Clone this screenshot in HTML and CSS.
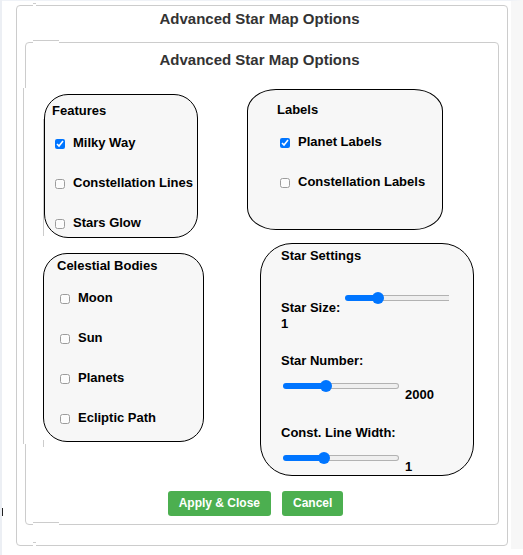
FILE: index.html
```html
<!DOCTYPE html>
<html lang="en">
<head>
<meta charset="utf-8">
<title>Advanced Star Map Options</title>
<link rel="stylesheet" href="styles.css">
</head>
<body>
<main class="page">
  <section class="panel">
    <h1 class="title">Advanced Star Map Options</h1>
    <form class="dialog">
      <h2 class="title">Advanced Star Map Options</h2>
      <div class="columns">
        <div class="column column-left">
          <section class="card features">
            <h3>Features</h3>
            <label class="option"><input type="checkbox" checked>Milky Way</label>
            <label class="option"><input type="checkbox">Constellation Lines</label>
            <label class="option"><input type="checkbox">Stars Glow</label>
          </section>
          <section class="card bodies">
            <h3>Celestial Bodies</h3>
            <label class="option"><input type="checkbox">Moon</label>
            <label class="option"><input type="checkbox">Sun</label>
            <label class="option"><input type="checkbox">Planets</label>
            <label class="option"><input type="checkbox">Ecliptic Path</label>
          </section>
        </div>
        <div class="column column-right">
          <section class="card labels">
            <h3>Labels</h3>
            <label class="option"><input type="checkbox" checked>Planet Labels</label>
            <label class="option"><input type="checkbox">Constellation Labels</label>
          </section>
          <section class="card settings">
            <h3>Star Settings</h3>
            <div class="size">
              <div class="size-row">
                <label for="size">Star Size:</label>
                <span class="clip"><input type="range" id="size" min="0" max="4" step="0.1" value="1" style="--fill: 25%"></span>
              </div>
              <output for="size">1</output>
            </div>
            <div class="setting">
              <label for="number">Star Number:</label>
              <div class="slider-row">
                <input type="range" id="number" min="100" max="5500" step="100" value="2000" style="--fill: 35%">
                <output for="number">2000</output>
              </div>
            </div>
            <div class="setting">
              <label for="width">Const. Line Width:</label>
              <div class="slider-row">
                <input type="range" id="width" min="0" max="3" step="0.1" value="1" style="--fill: 33%">
                <output for="width">1</output>
              </div>
            </div>
          </section>
        </div>
      </div>
      <div class="actions">
        <button type="submit">Apply &amp; Close</button>
        <button type="button">Cancel</button>
      </div>
      <span class="seam seam-left"></span>
      <span class="seam seam-top"></span>
      <span class="seam seam-bottom"></span>
      <span class="seam guide-upper"></span>
      <span class="seam guide-lower"></span>
    </form>
  </section>
</main>
</body>
</html>
```
FILE: styles.css
```css
* {
  box-sizing: border-box;
}

body {
  margin: 0;
  position: relative;
  min-height: 100vh;
  border-left: 2px solid #eceff4;
  background: #fff;
  color: #000;
  font: bold 13px/16px "Liberation Sans", Arial, sans-serif;
}

/* dark handle on the window's left edge */
body::before {
  content: "";
  position: absolute;
  left: -2px;
  top: 508px;
  width: 2px;
  height: 6px;
  border: solid #222;
  border-width: 1px 1px 1px 0;
}

.page {
  padding: 4px 3px 3px 14px;
  border-top: 1px solid #eff2f7;
  border-right: 12px solid #f7f7f7;
}

.panel {
  position: relative;
  padding: 4px 8px 20px;
  border: 1px solid #ccc;
  border-radius: 4px;
}

/* short raised notches in the panel outline */
.panel::before,
.panel::after {
  content: "";
  position: absolute;
  left: 16px;
  width: 3px;
  height: 3px;
  background: #fff;
}

.panel::before {
  top: -3px;
  border-top: 1px solid #ccc;
}

.panel::after {
  bottom: -1px;
  border-top: 1px solid #ccc;
}

.title {
  margin: 0;
  padding-right: 5px;
  color: #333;
  font-size: 15px;
  line-height: 18px;
  text-align: center;
}

.dialog {
  position: relative;
  margin-top: 14px;
  padding: 8px 24px 8px 17px;
  border: 1px solid #ccc;
  border-radius: 4px;
}

.dialog .title {
  padding-left: 2px;
  padding-right: 0;
}

.columns {
  display: grid;
  grid-template-columns: minmax(0, 161fr) minmax(0, 227fr);
  align-items: start;
  gap: 43px;
  margin-top: 20px;
}

.column {
  display: flex;
  flex-direction: column;
}

.column-left {
  gap: 15px;
  padding-top: 5px;
}

.column-right {
  gap: 13px;
}

.card {
  border: 1px solid #000;
  background: #f7f7f7;
}

.card h3 {
  margin: 0 0 16px;
  font-size: 13px;
}

.option {
  display: flex;
  align-items: center;
  gap: 8px;
  white-space: nowrap;
}

.option + .option {
  margin-top: 24px;
}

.option input {
  flex: none;
  width: 10px;
  height: 10px;
  margin: 2px 0 0;
  accent-color: #0075ff;
}

.option input:not(:checked) {
  opacity: 0.7;
}

.features {
  position: relative;
  z-index: 1;
  margin: 0 6px 0 1px;
  padding: 8px 0 6px 10px;
  border-radius: 24px;
}

.features h3 {
  margin-left: -3px;
}

.bodies {
  padding: 4px 0 15px 16px;
  border-radius: 24px;
}

.bodies h3 {
  margin-left: -3px;
}

.labels {
  margin-right: 31px;
  padding: 12px 0 39px 32px;
  border-radius: 29px / 22px;
}

.labels h3 {
  margin-left: -3px;
}

.settings {
  margin-left: 13px;
  padding: 4px 0 0 20px;
  border-radius: 32px;
}

.settings h3 {
  margin-bottom: 24px;
}

.size-row {
  display: flex;
  gap: 5px;
  height: 28px;
}

.size-row label {
  align-self: flex-end;
}

.size output {
  line-height: 15px;
}

.clip {
  width: 104px;
  height: 20px;
  overflow: hidden;
}

.setting {
  margin-top: 22px;
}

.setting label,
.size output {
  display: block;
}

.slider-row {
  display: flex;
  align-items: flex-end;
  gap: 6px;
  height: 34px;
  padding-left: 2px;
}

input[type="range"] {
  -webkit-appearance: none;
  appearance: none;
  display: block;
  flex: none;
  width: 116px;
  height: 12px;
  margin: 4px 0;
  background: none;
}

.slider-row input {
  align-self: flex-start;
  margin: 11px 0 0;
}

input[type="range"]::-webkit-slider-runnable-track {
  height: 6px;
  border: 1px solid transparent;
  border-radius: 3px;
  background:
    linear-gradient(to right, #0075ff var(--fill), #efefef var(--fill)) padding-box,
    linear-gradient(to right, #0075ff var(--fill), #b2b2b2 var(--fill)) border-box;
}

input[type="range"]::-webkit-slider-thumb {
  -webkit-appearance: none;
  width: 12px;
  height: 12px;
  margin-top: -4px;
  border-radius: 50%;
  background: #0075ff;
}

.actions {
  display: flex;
  justify-content: center;
  gap: 11px;
  margin-top: 15px;
  padding-right: 6px;
}

.actions button {
  padding: 5px 11px;
  border: 0;
  border-radius: 3px;
  background: #4caf50;
  color: #fff;
  font: bold 12px/15px "Liberation Sans", Arial, sans-serif;
}

/* stepped stretches of the dialog outline */
.seam {
  position: absolute;
  background: #fff;
}

.seam-left {
  left: -3px;
  top: 45px;
  bottom: 80px;
  width: 3px;
  border-left: 1px solid #ccc;
}

.seam-top,
.seam-bottom {
  left: 7px;
  width: 26px;
  height: 3px;
  border-top: 1px solid #ccc;
}

.seam-top {
  top: -3px;
}

.seam-bottom {
  bottom: -1px;
}

.guide-upper,
.guide-lower {
  left: 17px;
  width: 1px;
  background: #ccc;
}

.guide-upper {
  top: 76px;
  height: 117px;
}

.guide-lower {
  bottom: 77px;
  height: 7px;
}
```
